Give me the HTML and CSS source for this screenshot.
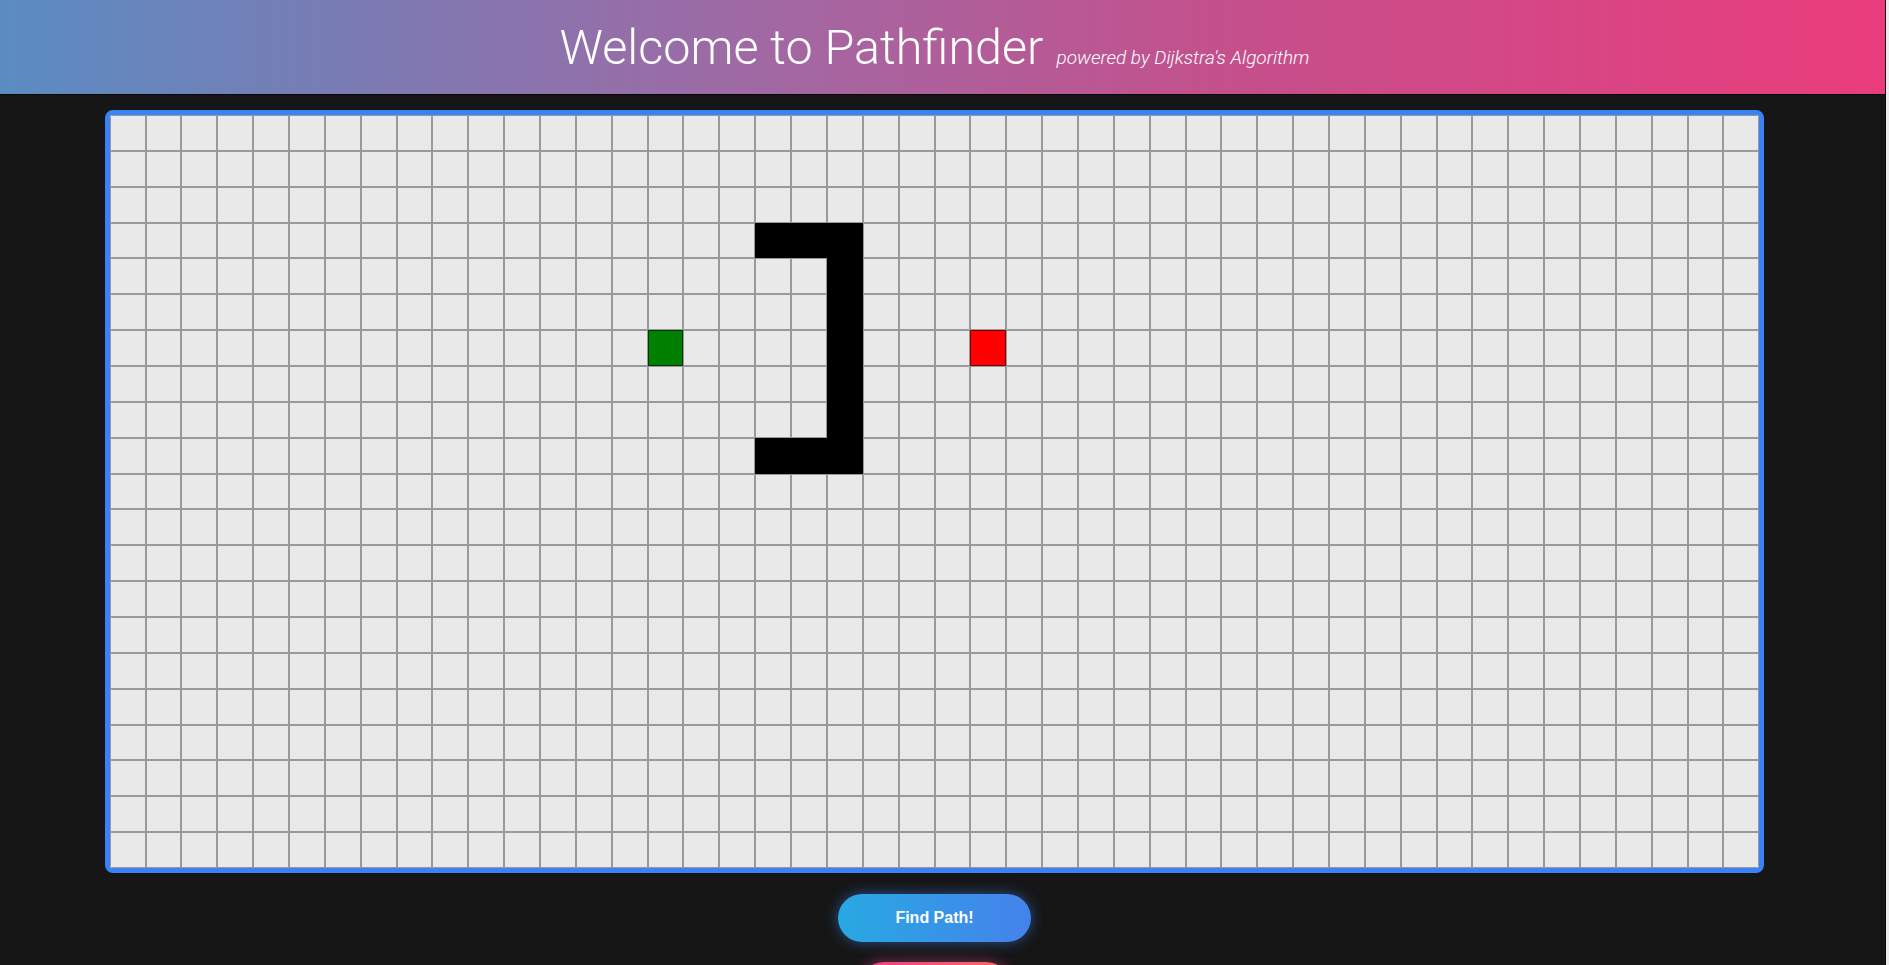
FILE: index.html
```html
<!DOCTYPE html>
<html lang="en">
<head>
<meta charset="utf-8">
<title>Pathfinder</title>
<link rel="stylesheet" href="styles.css">
</head>
<body>
<div class="app">
  <header class="header">
    <div class="header-inner">
      <h1 class="title">Welcome to Pathfinder</h1>
      <span class="subtitle">powered by Dijkstra's Algorithm</span>
    </div>
  </header>
  <main class="main">
    <div class="board" id="board"></div>
    <div class="actions">
      <button class="btn btn-find">Find Path!</button>
      <button class="btn btn-reset">Reset Grid</button>
    </div>
  </main>
</div>
<script src="script.js"></script>
</body>
</html>
```
FILE: styles.css
```css
html, body {
  margin: 0;
  padding: 0;
  height: 100%;
  overflow: hidden;
}
body {
  background: linear-gradient(to right, #161616 0, #161616 1885px, #0c0c0c 1885px, #0c0c0c 1886px, #ececec 1886px);
  font-family: Roboto, "Liberation Sans", Arial, sans-serif;
}
.app {
  width: 1885px;
}
.header {
  height: 94px;
  border-bottom: 1px solid #050505;
  background: linear-gradient(to right, #5a8cc2, #a069a4 40%, #c4508c 65%, #ea3c7c);
}
.header-inner {
  width: 1869px;
  display: flex;
  justify-content: center;
  align-items: baseline;
  padding-top: 19px;
  color: #fff;
}
.title {
  margin: 0;
  font-family: Roboto, sans-serif;
  font-weight: 300;
  font-size: 48.5px;
  line-height: normal;
}
.subtitle {
  margin-left: 13px;
  font-family: Roboto, sans-serif;
  font-weight: 300;
  font-style: italic;
  font-size: 19px;
}
.main {
  width: 1869px;
  display: flex;
  flex-direction: column;
  align-items: center;
  padding-top: 15px;
}
.board {
  display: grid;
  grid-template-columns: repeat(46, 35.87px);
  grid-auto-rows: 35.86px;
  border: 5px solid #3b82f6;
  border-radius: 8px;
  background: #e9e9e9;
  overflow: hidden;
}
.cell {
  box-sizing: border-box;
  border: 1px solid #999;
  background: #e9e9e9;
}
.cell.wall {
  background: #000;
  border-color: #000;
}
.cell.start {
  background: #008000;
  border-color: #063306;
}
.cell.end {
  background: #ff0000;
  border-color: #7a0000;
}
.actions {
  display: flex;
  flex-direction: column;
  align-items: center;
  gap: 20px;
  margin-top: 21px;
}
.btn {
  height: 48px;
  border: none;
  border-radius: 24px;
  color: #fff;
  font-family: "Liberation Sans", Arial, sans-serif;
  font-weight: bold;
  font-size: 16px;
  cursor: pointer;
}
.btn-find {
  width: 193px;
  background: linear-gradient(to right, #28a9e2, #4582ec);
  box-shadow: 0 0 14px rgba(59, 130, 246, 0.55);
}
.btn-reset {
  width: 150px;
  background: linear-gradient(to right, #ec3d84, #f2705f);
  box-shadow: 0 0 14px rgba(236, 72, 153, 0.5);
}
```
FILE: script.js
```js
(function () {
  var board = document.getElementById('board');
  var rows = 21, cols = 46;
  var walls = {};
  [[3, 18], [3, 19], [3, 20], [9, 18], [9, 19], [9, 20]].forEach(function (p) { walls[p[0] + '-' + p[1]] = true; });
  for (var r = 3; r <= 9; r++) walls[r + '-20'] = true;
  var frag = document.createDocumentFragment();
  for (var i = 0; i < rows; i++) {
    for (var j = 0; j < cols; j++) {
      var d = document.createElement('div');
      d.className = 'cell';
      if (walls[i + '-' + j]) d.className += ' wall';
      if (i === 6 && j === 15) d.className += ' start';
      if (i === 6 && j === 24) d.className += ' end';
      frag.appendChild(d);
    }
  }
  board.appendChild(frag);
})();
```
